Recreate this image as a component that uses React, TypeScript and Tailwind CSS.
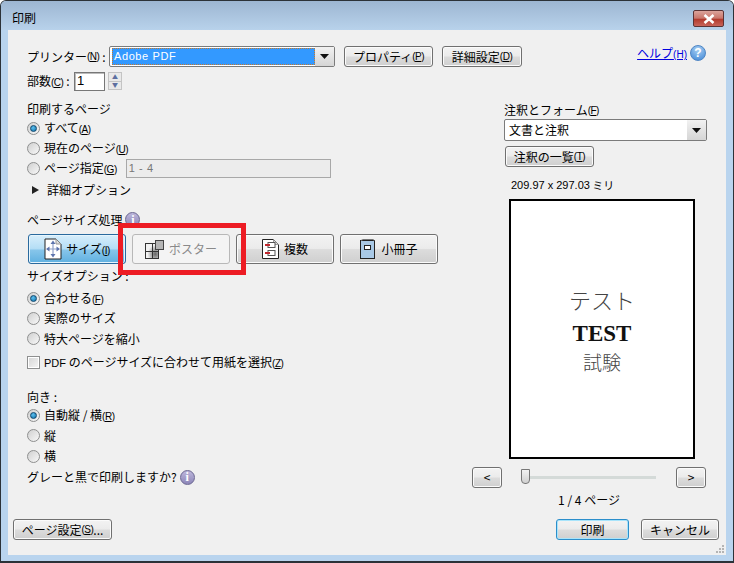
import type { ReactNode } from 'react';

const FONT = "font-['Noto_Sans_CJK_JP','Liberation_Sans',sans-serif]";

function Key({ k }: { k: string }) {
  return (
    <span className="text-[10px] tracking-[-0.5px] font-['Liberation_Sans',sans-serif]">
      (<u>{k}</u>)
    </span>
  );
}

const TONES = {
  plain:
    'border-[#707070] bg-[linear-gradient(#f3f3f3_0%,#ebebeb_48%,#dcdcdc_52%,#cfcfcf_100%)] shadow-[inset_0_0_0_1px_#fbfbfb]',
  active:
    'border-[#2a6a9e] bg-[linear-gradient(#d7eefb_0%,#b5def6_48%,#86c5ea_55%,#5fb0e0_100%)] shadow-[inset_0_0_0_1px_#e6f5fd]',
  focus:
    'border-[#2b8ecb] bg-[linear-gradient(#f3f3f3_0%,#ebebeb_48%,#dcdcdc_52%,#cfcfcf_100%)] shadow-[inset_0_0_0_1px_#a8e4fb]',
};

function Btn({
  className,
  tone = 'plain',
  children,
}: {
  className: string;
  tone?: keyof typeof TONES;
  children: ReactNode;
}) {
  return (
    <div
      className={`flex shrink-0 items-center justify-center whitespace-nowrap rounded-[3px] border text-[12px] text-black ${TONES[tone]} ${className}`}
    >
      {children}
    </div>
  );
}

function Radio({ on, children, h = 'h-[20px]' }: { on?: boolean; children: ReactNode; h?: string }) {
  return (
    <div className={`flex items-center gap-[4px] ${h}`}>
      <span className="flex h-[13px] w-[13px] shrink-0 items-center justify-center rounded-full border border-[#8e8f8f] bg-[linear-gradient(135deg,#d0d0d0,#f8f8f8)]">
        {on && <span className="h-[7px] w-[7px] rounded-full border border-[#11496f] bg-[radial-gradient(circle_at_40%_35%,#5fc0ee,#0b6ea8)]" />}
      </span>
      <span className="text-[12px] leading-none">{children}</span>
    </div>
  );
}

function Info() {
  return (
    <span className="inline-flex h-[15px] w-[15px] shrink-0 items-center justify-center rounded-full border border-[#6b6792] bg-[linear-gradient(#bdb7dc,#8d86b8)] font-['Liberation_Serif',serif] text-[12px] font-bold leading-none text-white">
      i
    </span>
  );
}

function SizeIcon() {
  return (
    <svg width="18" height="22" viewBox="0 0 18 22">
      <path d="M1 1H12L17 6V21H1Z" fill="#fff" stroke="#222" />
      <path d="M12 1V6H17" fill="#ddd" stroke="#999" />
      <path d="M9 4V18M3 11H15" stroke="#8fa0c8" strokeWidth="1.2" />
      <path d="M9 2.5 6.5 6H11.5ZM9 19.5 6.5 16H11.5ZM2 11 5.5 8.5V13.5ZM16 11 12.5 8.5V13.5Z" fill="#5d74ad" />
    </svg>
  );
}

function PosterIcon() {
  return (
    <svg width="19" height="19" viewBox="0 0 19 19">
      <defs>
        <radialGradient id="ps" cx="0.75" cy="0.7" r="0.6">
          <stop offset="0" stopColor="#666" />
          <stop offset="1" stopColor="#f2f2f2" />
        </radialGradient>
      </defs>
      <rect x="0.5" y="3.5" width="13" height="15" fill="url(#ps)" stroke="#333" />
      <path d="M0.5 11.5H13.5M7.5 3.5V18.5" stroke="#333" />
      <rect x="10.5" y="0.5" width="8" height="9" fill="#b5b5b5" stroke="#444" />
    </svg>
  );
}

function MultiIcon() {
  return (
    <svg width="17" height="20" viewBox="0 0 17 20">
      <path d="M0.5 0.5H11.5L16.5 5.5V19.5H0.5Z" fill="#fff" stroke="#222" />
      <path d="M11.5 0.5V5.5H16.5" fill="#ddd" stroke="#999" />
      <rect x="6" y="3.5" width="7" height="5" fill="#fff" stroke="#555" />
      <rect x="6" y="11.5" width="7" height="5" fill="#fff" stroke="#555" />
      <path d="M3 6H8M3 14H8" stroke="#c0272d" strokeWidth="2" />
    </svg>
  );
}

function BookIcon() {
  return (
    <svg width="15" height="20" viewBox="0 0 15 20">
      <rect x="0.5" y="1.5" width="14" height="18" fill="#a9c9e6" stroke="#222" />
      <path d="M1 1.5 3 0.5H13L14.5 1.5" fill="none" stroke="#777" />
      <rect x="4.5" y="6.5" width="6" height="4" fill="#fff" stroke="#222" />
    </svg>
  );
}

function HelpIcon() {
  return (
    <span className="flex h-[16px] w-[16px] items-center justify-center rounded-full border border-[#4f86c4] bg-[radial-gradient(circle_at_50%_25%,#a9d0f3,#3f86d6)] font-['Liberation_Sans',sans-serif] text-[12px] font-bold leading-none text-white">
      ?
    </span>
  );
}

function Arrow() {
  return (
    <svg width="9" height="5" viewBox="0 0 9 5">
      <path d="M0 0H9L4.5 5Z" fill="#111" />
    </svg>
  );
}

export default function App() {
  return (
    <div className={`flex h-[563px] w-[734px] flex-col overflow-hidden ${FONT} text-black bg-white`}>
      <div className="relative flex h-full flex-col rounded-t-[6px] border border-b-2 border-[#2c3238] bg-[#b9d4ee]">
        <div className="flex h-[29px] shrink-0 justify-between rounded-t-[5px] bg-[linear-gradient(#9db6d2,#b8d2eb)] pl-[11px] pr-[9px]">
          <span className="mt-[11px] text-[12px] leading-none">印刷</span>
          <div className="mt-[9px] flex h-[17px] w-[31px] items-center justify-center rounded-[2px] border border-[#5b3335] bg-[linear-gradient(#dba39b_0%,#c9766b_48%,#b23a2d_55%,#c8645a_100%)]">
            <svg width="12" height="10" viewBox="0 0 12 10">
              <path d="M1.5 1 10.5 9M10.5 1 1.5 9" stroke="#fff" strokeWidth="2.6" />
            </svg>
          </div>
        </div>

        <div className="mx-[7px] mb-[6px] flex min-h-0 flex-1 flex-col bg-[#f0f0f0] pl-[19px] pr-[7px] text-[12px]">
          <div className="flex h-[37px] items-end">
            <div className="flex h-[21px] w-[82px] items-center whitespace-nowrap">
              プリンター<Key k="N" />&nbsp;:
            </div>
            <div className="flex h-[21px] w-[226px] items-center rounded-[2px] border border-[#7b7b7b] bg-white pl-[2px]">
              <span className="flex h-[17px] flex-1 items-center border border-dotted border-[#c9792a] bg-[#3399ff] pl-[1px] font-['Liberation_Sans',sans-serif] text-[11px] tracking-[0.6px] text-white">
                Adobe PDF
              </span>
              <span className="flex h-full w-[19px] items-center justify-center bg-[linear-gradient(#f2f2f2,#d5d5d5)]">
                <Arrow />
              </span>
            </div>
            <Btn className="ml-[9px] h-[21px] w-[89px]">
              プロパティ<Key k="P" />
            </Btn>
            <Btn className="ml-[9px] h-[21px] w-[80px]">
              詳細設定<Key k="D" />
            </Btn>
            <div className="mb-[5px] ml-auto flex items-center gap-[3px] pr-[13px]">
              <span className="text-[12px] text-[#0000e0] underline">
                ヘルプ<span className="text-[10px] font-['Liberation_Sans',sans-serif]">(H)</span>
              </span>
              <HelpIcon />
            </div>
          </div>

          <div className="mt-[3px] flex h-[22px] items-center">
            <span className="w-[47px] whitespace-nowrap">
              部数<Key k="C" />&nbsp;:
            </span>
            <span className="flex h-[19px] w-[31px] items-center border border-[#777] bg-white pl-[2px] font-['Liberation_Sans',sans-serif] text-[13px] shadow-[inset_1px_1px_0_#bbb]">
              1
            </span>
            <span className="ml-[3px] flex h-[18px] w-[14px] flex-col border border-[#c4c4c4] bg-[#e9e9e9]">
              <span className="flex flex-1 items-center justify-center border-b border-[#c4c4c4] text-[6px] leading-none text-[#5d6fa0]">▲</span>
              <span className="flex flex-1 items-center justify-center text-[6px] leading-none text-[#5d6fa0]">▼</span>
            </span>
          </div>

          <div className="flex min-h-0 flex-1">
            <div className="flex w-[477px] shrink-0 flex-col pt-[8px]">
              <div className="flex h-[18px] items-center">印刷するページ</div>
              <Radio on>
                すべて<Key k="A" />
              </Radio>
              <Radio>
                現在のページ<Key k="U" />
              </Radio>
              <div className="flex h-[21px] items-center">
                <Radio>
                  ページ指定<Key k="G" />
                </Radio>
                <span className="ml-[9px] flex h-[19px] w-[205px] items-center border border-[#a8a8a8] bg-[#ececec] pl-[2px] font-['Liberation_Sans',sans-serif] text-[11px] tracking-[0.6px] text-[#777]">
                  1 - 4
                </span>
              </div>
              <div className="flex h-[21px] items-center pl-[5px]">
                <svg width="7" height="8" viewBox="0 0 7 8">
                  <path d="M0 0 7 4 0 8Z" fill="#222" />
                </svg>
                <span className="ml-[8px]">詳細オプション</span>
              </div>

              <div className="mt-[9px] flex h-[21px] items-center gap-[3px]">
                ページサイズ処理 <Info />
              </div>
              <div className="ml-[1px] mt-[4px] flex h-[30px] gap-[6px]">
                <Btn tone="active" className="w-[98px] gap-[4px]">
                  <SizeIcon />
                  <span>
                    サイズ<Key k="I" />
                  </span>
                </Btn>
                <div className="flex w-[98px] shrink-0 items-center justify-center gap-[5px] rounded-[3px] border border-[#b8b8b8] bg-[#f4f4f4] text-[12px] text-[#8a8a8a]">
                  <PosterIcon />
                  ポスター
                </div>
                <Btn className="w-[98px] gap-[5px]">
                  <MultiIcon />
                  複数
                </Btn>
                <Btn className="w-[98px] gap-[6px]">
                  <BookIcon />
                  小冊子
                </Btn>
              </div>
              <div className="mt-[2px] flex h-[20px] items-center">サイズオプション :</div>
              <div className="mt-[2px]">
                <Radio on>
                  合わせる<Key k="F" />
                </Radio>
                <Radio>実際のサイズ</Radio>
                <Radio h="h-[21px]">特大ページを縮小</Radio>
              </div>
              <div className="mt-[3px] flex h-[20px] items-center gap-[4px]">
                <span className="h-[13px] w-[13px] border border-[#8e8f8f] bg-[linear-gradient(135deg,#d4d4d4,#f6f6f6)] shadow-[inset_0_0_0_1px_#fff]" />
                <span className="text-[12px] leading-none">
                  <span className="font-['Liberation_Sans',sans-serif] text-[11px]">PDF</span> のページサイズに合わせて用紙を選択<Key k="Z" />
                </span>
              </div>

              <div className="mt-[16px] flex h-[17px] items-center">向き :</div>
              <Radio on>
                自動縦 / 横<Key k="R" />
              </Radio>
              <Radio h="h-[21px]">縦</Radio>
              <Radio>横</Radio>
              <div className="flex h-[22px] items-center gap-[3px]">
                グレーと黒で印刷しますか? <Info />
              </div>
            </div>

            <div className="flex min-w-0 flex-1 flex-col pt-[9px]">
              <div className="flex h-[18px] items-center">
                注釈とフォーム<Key k="F" />
              </div>
              <div className="flex h-[22px] w-[203px] items-center rounded-[2px] border border-[#7b7b7b] bg-white pl-[4px]">
                <span className="flex-1">文書と注釈</span>
                <span className="flex h-full w-[19px] items-center justify-center bg-[linear-gradient(#f2f2f2,#d5d5d5)]">
                  <Arrow />
                </span>
              </div>
              <Btn className="ml-[1px] mt-[5px] h-[21px] w-[89px]">
                注釈の一覧<Key k="T" />
              </Btn>
              <div className="ml-[7px] mt-[8px] flex h-[20px] items-center text-[11px]">
                <span className="font-['Liberation_Sans',sans-serif]">209.97 x 297.03 </span>
                <span>&nbsp;ミリ</span>
              </div>
              <div className="ml-[5px] mt-[4px] flex h-[260px] w-[186px] flex-col items-center justify-center border-2 border-black bg-white pb-[4px] text-[#444]">
                <span className="text-[22px] font-light leading-[40px]">テスト</span>
                <span className="font-['Liberation_Serif',serif] text-[23px] font-bold leading-[30px] text-[#111]">TEST</span>
                <span className="text-[19px] font-light leading-[26px]">試験</span>
              </div>
              <div className="ml-[-32px] mt-[7px] flex h-[22px] items-center">
                <Btn className="h-[21px] w-[30px] text-[11px]">&lt;</Btn>
                <div className="relative ml-[19px] flex h-[16px] w-[135px] items-center">
                  <span className="h-[3px] w-full bg-[#d4dad8]" />
                  <span className="absolute left-0 top-0 h-[15px] w-[9px] rounded-b-[4px] border border-[#777] bg-[linear-gradient(#f2f2f2,#d0d0d0)]" />
                </div>
                <Btn className="ml-[20px] h-[21px] w-[30px] text-[11px]">&gt;</Btn>
              </div>
              <div className="ml-[10px] flex h-[24px] w-[150px] items-center justify-center text-[12px]">
                1 / 4 ページ
              </div>
            </div>
          </div>

          <div className="mb-[15px] flex h-[21px] shrink-0 items-center">
            <Btn className="ml-[-14px] h-[21px] w-[99px]">
              ページ設定<Key k="S" />...
            </Btn>
            <Btn tone="focus" className="ml-[444px] h-[21px] w-[73px]">印刷</Btn>
            <Btn className="ml-[12px] h-[21px] w-[78px]">キャンセル</Btn>
          </div>
        </div>

        {/* resize grip */}
        <svg className="absolute bottom-[8px] right-[9px]" width="9" height="9" viewBox="0 0 9 9">
          <path d="M7 1h2v2H7zM4 4h2v2H4zM7 4h2v2H7zM1 7h2v2H1zM4 7h2v2H4zM7 7h2v2H7z" fill="#b4b4b4" />
        </svg>

        {/* red highlight drawn over the dialog */}
        <div className="absolute left-[117px] top-[222px] h-[52px] w-[128px] border-[5px] border-[#ed1c24]" />
      </div>
    </div>
  );
}
